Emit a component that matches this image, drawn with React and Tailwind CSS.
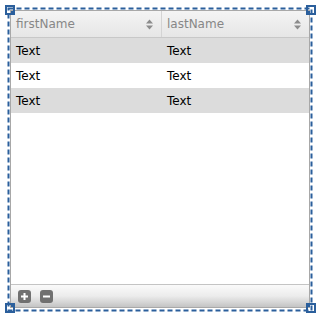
import React from "react";

function SortIcon() {
  return (
    <svg width="7" height="11" viewBox="0 0 7 11" className="shrink-0">
      <path d="M3.5 0.5 L7 4.5 L0 4.5 Z" fill="#8c8c8c" />
      <path d="M3.5 10.5 L7 6.5 L0 6.5 Z" fill="#8c8c8c" />
    </svg>
  );
}

function Handle({ className, dot }) {
  return (
    <div className={`absolute w-[10px] h-[10px] border-2 border-[#2b5f9c] ${className}`}>
      <div className={`absolute w-[2px] h-[2px] bg-[#2b5f9c] ${dot}`} />
    </div>
  );
}

export default function App() {
  const rows = [true, false, true];
  return (
    <div className="relative w-[321px] h-[318px] bg-white" style={{ fontFamily: '"DejaVu Sans", sans-serif' }}>
      <div className="absolute left-[10px] top-[10px] w-[300px] h-[298px] border border-[#a8a8a8] flex flex-col bg-white">
        <div className="flex h-[27px] border-b border-[#c8c8c8] bg-gradient-to-b from-[#f4f4f4] to-[#e6e6e6] text-[12px] text-[#878787]">
          <div className="w-[151px] flex items-center justify-between pl-[5px] pr-[8px] border-r border-[#d4d4d4]">
            <span>firstName</span>
            <SortIcon />
          </div>
          <div className="flex-1 flex items-center justify-between pl-[5px] pr-[8px]">
            <span>lastName</span>
            <SortIcon />
          </div>
        </div>
        <div className="flex-1 text-[12px] text-black">
          {rows.map((g, i) => (
            <div key={i} className={`flex h-[25px] items-center ${g ? "bg-[#dcdcdc]" : "bg-white"}`}>
              <div className="w-[151px] pl-[5px]">Text</div>
              <div className="flex-1 pl-[5px]">Text</div>
            </div>
          ))}
        </div>
        <div className="h-[23px] border-t border-[#c4c4c4] bg-gradient-to-b from-[#fafafa] via-[#ececec] to-[#c4c4c4] flex items-center gap-[9px] pl-[7px]">
          <div className="w-[13px] h-[13px] rounded-[3px] bg-[#707070] flex items-center justify-center">
            <svg width="9" height="9" viewBox="0 0 9 9"><path d="M4.5 1 V8 M1 4.5 H8" stroke="white" strokeWidth="2" /></svg>
          </div>
          <div className="w-[13px] h-[13px] rounded-[3px] bg-[#707070] flex items-center justify-center">
            <svg width="9" height="9" viewBox="0 0 9 9"><path d="M1 4.5 H8" stroke="white" strokeWidth="2" /></svg>
          </div>
        </div>
      </div>
      <svg className="absolute left-0 top-0 pointer-events-none" width="321" height="318">
        <rect x="8.5" y="8.5" width="303" height="302" fill="none" stroke="#2b5f9c" strokeWidth="2" strokeDasharray="5 3" />
      </svg>
      <Handle className="left-[5px] top-[5px]" dot="right-0 bottom-0" />
      <Handle className="right-[5px] top-[5px]" dot="left-0 bottom-0" />
      <Handle className="left-[5px] bottom-[5px]" dot="right-0 top-0" />
      <Handle className="right-[5px] bottom-[5px]" dot="left-0 top-0" />
    </div>
  );
}
